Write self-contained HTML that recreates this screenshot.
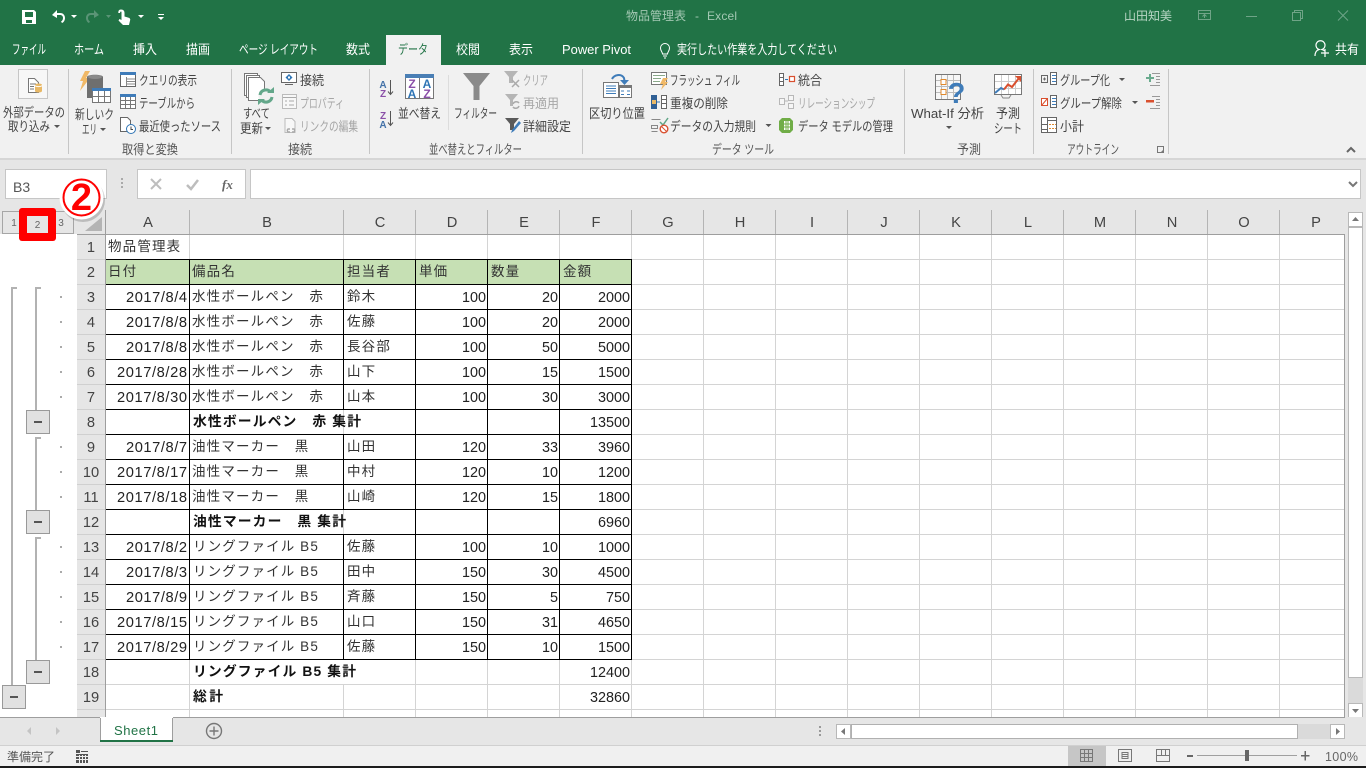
<!DOCTYPE html>
<html lang="ja"><head><meta charset="utf-8"><title>物品管理表 - Excel</title>
<style>
html,body{margin:0;padding:0;background:#e6e6e6;overflow:hidden}
svg{display:block;font-family:"Liberation Sans","Noto Sans CJK JP",sans-serif}
.r text{font-size:13px;fill:#444}
.r text.g{fill:#a6a6a6}
.c{font-size:13.5px;fill:#333;letter-spacing:1.17px}
.d{font-size:14.67px;fill:#222}
.n{font-size:14.4px;fill:#222;text-anchor:end}
.b{font-size:13.8px;font-weight:bold;fill:#111}
.h{font-size:14.67px;fill:#444;text-anchor:middle}
.tb text{font-size:13px;fill:#fff}
</style></head><body>
<svg xmlns="http://www.w3.org/2000/svg" width="1366" height="768" viewBox="0 0 1366 768">
<rect width="1366" height="768" fill="#e6e6e6"/>
<!-- title -->
<rect width="1366" height="65" fill="#217346"/>
<g fill="#fff">
<path fill-rule="evenodd" d="M22 10h12l2 2v12H22zM25 12v5h8v-5zM26 20v3h6v-3z"/>
<path d="M52 15l5-5v3h3c3.500 0 5 2.500 5 5s-1.500 4.500-3 5l-1-1.500c1-.5 2-1.800 2-3.500s-1-3-3-3h-3v3z"/>
<path d="M71 15h6l-3 3zM138 15h6l-3 3zM158 14h6v1h-6zM158 17h6l-3 3z"/>
<path d="M121 9.500c2.500 0 3.500 1.500 3.500 3.500v3.500l5 1.500.8 1.500-1.300 5.500h-6l-4.500-4.500 1-1.500 2 1V13c0-1 .0-1.500-.5-1.500s-1 .5-1 1.500h-1.700c0-2 .5-3.500 2.700-3.500z"/>
</g>
<g fill="#5a9476"><path d="M99 15l-5-5v3h-3c-3.500 0-5 2.500-5 5s1.500 4.500 3 5l1-1.500c-1-.5-2-1.800-2-3.500s1-3 3-3h3v3z"/><path d="M106 15h5l-2.500 3z"/></g>
<text x="626" y="20" font-size="12" fill="#a3c8b3" textLength="60">物品管理表</text>
<text x="695" y="20" font-size="12" fill="#a3c8b3">-</text>
<text x="707" y="20" font-size="12" fill="#a3c8b3" textLength="30">Excel</text>
<text x="1124" y="20" font-size="12" fill="#b9d6c5" textLength="48">山田知美</text>
<g fill="none" stroke="#6fa487" stroke-width="1">
<path d="M1198.500 10.500h12v9h-12zM1198.500 13.500h12M1204.500 18v-3M1202.500 16.500l2-2 2 2"/>
<path d="M1246 16.500h11"/>
<path d="M1292.500 12.500h8v8h-8zM1294.500 12.500v-2h8v8h-2"/>
<path d="M1338 10.500l10 10M1348 10.500l-10 10"/>
</g>
<!-- ribbon -->
<rect y="65" width="1366" height="93" fill="#f1f1f1"/>
<rect y="158" width="1366" height="2" fill="#d6d6d6"/>
<!-- tabs -->
<rect x="386" y="35" width="55" height="30" fill="#f1f1f1"/>
<g class="tb">
<text x="12" y="54" textLength="34" lengthAdjust="spacingAndGlyphs">ファイル</text>
<text x="74" y="54" textLength="30" lengthAdjust="spacingAndGlyphs">ホーム</text>
<text x="133" y="54" textLength="24" lengthAdjust="spacingAndGlyphs">挿入</text>
<text x="186" y="54" textLength="24" lengthAdjust="spacingAndGlyphs">描画</text>
<text x="239" y="54" textLength="79" lengthAdjust="spacingAndGlyphs">ページ レイアウト</text>
<text x="346" y="54" textLength="24" lengthAdjust="spacingAndGlyphs">数式</text>
<text x="398" y="54" textLength="30" lengthAdjust="spacingAndGlyphs" style="fill:#217346">データ</text>
<text x="456" y="54" textLength="24" lengthAdjust="spacingAndGlyphs">校閲</text>
<text x="509" y="54" textLength="24" lengthAdjust="spacingAndGlyphs">表示</text>
<text x="562" y="54" textLength="69" lengthAdjust="spacingAndGlyphs">Power Pivot</text>
<text x="677" y="54" textLength="160" lengthAdjust="spacingAndGlyphs">実行したい作業を入力してください</text>
<text x="1335" y="54" textLength="24" lengthAdjust="spacingAndGlyphs">共有</text>
</g>
<g fill="none" stroke="#fff">
<path d="M662.500 54c0-2-2-3-2-6a4.500 4.500 0 0 1 9 0c0 3-2 4-2 6zM663 56h4M664 58h2"/>
<path d="M1315 56c0-4 2-6 4-6.500a4.500 4.500 0 1 1 3 0c1 .3 2 .8 2.500 1.500M1325 49v8M1321 53h8" stroke-width="1.200"/>
</g>
<path stroke="#c6c6c6" d="M68.500 69v85M231.500 69v85M369.500 69v85M582.500 69v85M904.500 69v85M1033.500 69v85M1168.500 69v85"/>
<path stroke="#dcdcdc" d="M448.500 75v55"/>
<g class="r">
<text x="3" y="117" textLength="62" lengthAdjust="spacingAndGlyphs">外部データの</text>
<text x="8" y="131" textLength="42" lengthAdjust="spacingAndGlyphs">取り込み</text>
<text x="75" y="119" textLength="39" lengthAdjust="spacingAndGlyphs">新しいク</text>
<text x="82" y="134" textLength="15" lengthAdjust="spacingAndGlyphs">エリ</text>
<text x="139" y="85" textLength="58" lengthAdjust="spacingAndGlyphs">クエリの表示</text>
<text x="139" y="108" textLength="56" lengthAdjust="spacingAndGlyphs">テーブルから</text>
<text x="139" y="131" textLength="82" lengthAdjust="spacingAndGlyphs">最近使ったソース</text>
<text x="243" y="118" textLength="27" lengthAdjust="spacingAndGlyphs">すべて</text>
<text x="240" y="133" textLength="23" lengthAdjust="spacingAndGlyphs">更新</text>
<text x="300" y="85" textLength="24" lengthAdjust="spacingAndGlyphs">接続</text>
<text class="g" x="300" y="108" textLength="44" lengthAdjust="spacingAndGlyphs">プロパティ</text>
<text class="g" x="300" y="131" textLength="58" lengthAdjust="spacingAndGlyphs">リンクの編集</text>
<text x="398" y="118" textLength="43" lengthAdjust="spacingAndGlyphs">並べ替え</text>
<text x="454" y="118" textLength="43" lengthAdjust="spacingAndGlyphs">フィルター</text>
<text class="g" x="523" y="85" textLength="25" lengthAdjust="spacingAndGlyphs">クリア</text>
<text class="g" x="523" y="108" textLength="36" lengthAdjust="spacingAndGlyphs">再適用</text>
<text x="523" y="131" textLength="48" lengthAdjust="spacingAndGlyphs">詳細設定</text>
<text x="589" y="118" textLength="56" lengthAdjust="spacingAndGlyphs">区切り位置</text>
<text x="670" y="85" textLength="70" lengthAdjust="spacingAndGlyphs">フラッシュ フィル</text>
<text x="670" y="108" textLength="58" lengthAdjust="spacingAndGlyphs">重複の削除</text>
<text x="670" y="131" textLength="86" lengthAdjust="spacingAndGlyphs">データの入力規則</text>
<text x="798" y="85" textLength="24" lengthAdjust="spacingAndGlyphs">統合</text>
<text class="g" x="798" y="108" textLength="77" lengthAdjust="spacingAndGlyphs">リレーションシップ</text>
<text x="798" y="131" textLength="95" lengthAdjust="spacingAndGlyphs">データ モデルの管理</text>
<text x="911" y="118" textLength="73" lengthAdjust="spacingAndGlyphs">What-If 分析</text>
<text x="996" y="118" textLength="24" lengthAdjust="spacingAndGlyphs">予測</text>
<text x="994" y="133" textLength="28" lengthAdjust="spacingAndGlyphs">シート</text>
<text x="1060" y="85" textLength="50" lengthAdjust="spacingAndGlyphs">グループ化</text>
<text x="1060" y="108" textLength="62" lengthAdjust="spacingAndGlyphs">グループ解除</text>
<text x="1060" y="131" textLength="24" lengthAdjust="spacingAndGlyphs">小計</text>
<g style="fill:#555">
<text style="fill:#555" x="122" y="154" textLength="56" lengthAdjust="spacingAndGlyphs">取得と変換</text>
<text style="fill:#555" x="288" y="154" textLength="24" lengthAdjust="spacingAndGlyphs">接続</text>
<text style="fill:#555" x="429" y="154" textLength="93" lengthAdjust="spacingAndGlyphs">並べ替えとフィルター</text>
<text style="fill:#555" x="712" y="154" textLength="62" lengthAdjust="spacingAndGlyphs">データ ツール</text>
<text style="fill:#555" x="957" y="154" textLength="24" lengthAdjust="spacingAndGlyphs">予測</text>
<text style="fill:#555" x="1067" y="154" textLength="52" lengthAdjust="spacingAndGlyphs">アウトライン</text>
</g>
</g>
<!-- drop arrows -->
<path fill="#555" d="M54 125h6l-3 3zM100 128h6l-3 3zM265 127h6l-3 3zM765.500 124h6l-3 3zM1119 78h6l-3 3zM1132 101h6l-3 3zM946 126h6l-3 3z"/>
<!-- external data -->
<rect x="18.500" y="69.500" width="29" height="29" fill="#f7f7f7" stroke="#c6c6c6"/>
<path fill="#fff" stroke="#777" d="M28.500 78.500h6l4 4v10h-10z"/><path stroke="#777" d="M30 84h6M30 86.500h4M30 89h4"/>
<path fill="#e8b866" d="M35 85c0-2 7-2 7 0v6c0 2-7 2-7 0z"/><path stroke="#fff" fill="none" d="M35 85.500c1 1.500 6 1.500 7 0"/>
<!-- new query -->
<path fill="#f0b866" d="M85 71h5l-4 7h4l-10 13 3-10h-3z"/>
<path fill="#6f6f6f" d="M87 77c0-3 16-3 16 0v21H87z"/><ellipse cx="95" cy="77" rx="7" ry="2" fill="#8a8a8a"/>
<rect x="92.500" y="88.500" width="18" height="14" fill="#fff" stroke="#777"/><rect x="92" y="88" width="19" height="3" fill="#3f7cb9"/>
<path stroke="#777" d="M98.500 91v12M104.500 91v12M93 96.500h17"/>
<!-- query small -->
<rect x="120.500" y="73.500" width="15" height="13" fill="#fff" stroke="#666"/><rect x="120" y="72" width="16" height="3" fill="#3f7cb9"/>
<path stroke="#888" d="M126.500 77v9M127 79h8M127 81.500h8M127 84h8"/>
<rect x="120.500" y="95.500" width="15" height="13" fill="#fff" stroke="#777"/><rect x="120" y="94" width="16" height="3" fill="#3f7cb9"/>
<path stroke="#777" d="M125.500 97v12M130.500 97v12M121 100.500h14M121 104.500h14"/>
<path fill="#fff" stroke="#666" d="M120.500 117.500h7l3 3v11h-10z"/><circle cx="131" cy="129" r="4.500" fill="#fff" stroke="#2f75b5"/><path stroke="#444" fill="none" d="M131 126.500v3h2"/>
<!-- refresh all -->
<g fill="#fff" stroke="#777"><path d="M244.500 73.500h13v22h-13z"/><path d="M246.500 75.500h13v22h-13z"/><path d="M248.500 77.500h12l4 4v19h-16z"/></g>
<circle cx="266" cy="96" r="7.500" fill="#f1f1f1"/>
<g fill="none" stroke="#63a78a" stroke-width="3"><path d="M260 95a6 6 0 0 1 10.500-3M272 97a6 6 0 0 1-10.500 3"/></g>
<path fill="#63a78a" d="M267 93h7v-6zM265 99h-7v6z"/>
<!-- connections -->
<rect x="281.500" y="72.500" width="15" height="10" fill="#fff" stroke="#666"/><path stroke="#666" d="M285 84.500h8"/><path fill="#2f75b5" d="M289 74l3.500 3.500L289 81l-3.500-3.500z"/><rect x="288" y="76.500" width="2" height="2" fill="#fff"/>
<rect x="282.500" y="94.500" width="14" height="14" fill="#f7f7f7" stroke="#bbb"/><path stroke="#aaa" fill="none" d="M283 97.500h13M285 101h2M289 101h5M285 105h2M289 105h5"/>
<path fill="#f7f7f7" stroke="#bbb" d="M285 118.500h7l3 3v11h-10z"/><path fill="none" stroke="#aaa" stroke-width="1.500" d="M290 129h-2a2 2 0 0 0 0 3h2M292 129h2a2 2 0 0 1 0 3h-2"/>
<!-- sort -->
<g font-size="10" font-weight="bold" text-anchor="middle">
<text x="383" y="88" fill="#4472a8">A</text><text x="383" y="97" fill="#8a4fa8">Z</text>
<text x="383" y="119" fill="#8a4fa8">Z</text><text x="383" y="128" fill="#4472a8">A</text>
</g>
<path fill="none" stroke="#555" d="M390.500 80v14M388 91.500l2.500 3 2.500-3M390.500 111v14M388 122.500l2.500 3 2.500-3"/>
<rect x="405.500" y="74.500" width="28" height="24" fill="#fff" stroke="#777"/><rect x="405" y="74" width="29" height="4" fill="#4a7fb5"/><path stroke="#777" d="M419.500 78v21"/>
<g font-size="12" font-weight="bold" text-anchor="middle">
<text x="412" y="88" fill="#8a4fa8">Z</text><text x="412" y="98" fill="#2f75b5">A</text><text x="427" y="88" fill="#2f75b5">A</text><text x="427" y="98" fill="#8a4fa8">Z</text>
</g>
<!-- filter -->
<path fill="#8a8a8a" d="M463 73h27l-10.500 13v14h-6V86z"/>
<path fill="#b5b5b5" d="M504 71h14l-5 6v6h-4v-6z"/><path stroke="#aaa" stroke-width="1.500" d="M512 80l7 7M519 80l-7 7"/>
<path fill="#b5b5b5" d="M505 94h13l-5 6v6h-3v-6z"/><path fill="none" stroke="#aaa" stroke-width="1.500" d="M513 104a3.500 3.500 0 0 1 6-1M519 106a3.500 3.500 0 0 1-6 1"/>
<path fill="#5a5a5a" d="M505 118h14l-5 6v6h-4v-6z"/><path fill="#3f7cb9" d="M519 121l2 2-7 8-3 2 1-3z"/>
<!-- text to columns -->
<rect x="603.500" y="82.500" width="15" height="15" fill="#fff" stroke="#777"/><path stroke="#3f7cb9" d="M606 86h10M606 88.500h10M606 91h10M606 93.500h10"/>
<rect x="619.500" y="85.500" width="12" height="12" fill="#fff" stroke="#777"/><rect x="619" y="85" width="13" height="3" fill="#777"/><path stroke="#3f7cb9" d="M621 91h3M627 91h3M621 94.500h3M627 94.500h3"/>
<path fill="none" stroke="#3f7cb9" stroke-width="2" d="M612 79c2-4 9-6 12-1l.5 3"/><path fill="#3f7cb9" d="M620 80h9l-4.500 5z"/>
<!-- flash fill -->
<rect x="651.500" y="72.500" width="15" height="12" fill="#fff" stroke="#777"/><path stroke="#8aa98a" d="M653 75.500h12M653 78.500h8M653 81.500h7"/>
<path fill="#f0b866" d="M663 78h5l-3 4h3l-7 8 2-6h-3z"/>
<!-- remove dup -->
<rect x="651" y="95" width="6" height="14" fill="#2f5f94"/><rect x="652" y="100" width="4" height="4" fill="#e8b866"/>
<rect x="661.500" y="95.500" width="5" height="13" fill="#fff" stroke="#666"/><path stroke="#666" d="M662 99.500h4M662 103.500h4"/><path stroke="#2f75b5" d="M657 102h3"/>
<!-- validation -->
<path stroke="#888" fill="none" d="M651.500 119.500h9M651.500 125.500h6v3h-6zM651.500 131.500h6"/><path fill="none" stroke="#5fa586" stroke-width="1.500" d="M660 122l3 3 5-7"/>
<circle cx="664" cy="129" r="3.800" fill="#fff" stroke="#d9502f" stroke-width="1.400"/><path stroke="#d9502f" d="M661.500 126.500l5 5"/>
<!-- consolidate -->
<rect x="779.500" y="73.500" width="4" height="12" fill="#fff" stroke="#666"/><path stroke="#666" d="M780 77.500h3M780 81.500h3"/><path stroke="#2f75b5" d="M785 79.500h3"/>
<rect x="789.500" y="76.500" width="5" height="5" fill="#fff" stroke="#d9502f" stroke-width="1.200"/>
<!-- relationship -->
<g fill="#f6f6f6" stroke="#b8b8b8"><rect x="779.500" y="98.500" width="5" height="6"/><rect x="788.500" y="95.500" width="5" height="5"/><rect x="788.500" y="103.500" width="5" height="5"/></g>
<path stroke="#b8b8b8" fill="none" d="M785 101h3"/>
<!-- data model -->
<path fill="#70ad47" d="M782 118h8l3 3v9l-3 3h-8l-3-3v-9z"/><path fill="#fff" d="M784 121h6v9h-6z"/><path stroke="#70ad47" d="M786 121v9M788 121v9M784 124h6M784 127h6"/>
<!-- what if -->
<rect x="935.500" y="74.500" width="25" height="25" fill="#f7f7f7" stroke="#777"/>
<path stroke="#bbb" d="M941.500 75v24M947.500 75v24M953.500 75v24M936 80.500h24M936 86.500h24M936 92.500h24"/>
<rect x="941" y="79.500" width="5" height="5" fill="#fff" stroke="#e08a2e"/><rect x="941" y="89.500" width="5" height="5" fill="#fff" stroke="#e08a2e"/>
<text x="956.500" y="103" font-size="29" font-weight="bold" fill="#3f7cb9" text-anchor="middle">?</text>
<!-- forecast -->
<rect x="994.500" y="74.500" width="27" height="20" fill="#fff" stroke="#777"/>
<path stroke="#ccc" d="M1001.500 75v19M1008.500 75v19M1015.500 75v19M995 81.500h26M995 88.500h26"/>
<path fill="none" stroke="#3f7cb9" stroke-width="2" d="M995 93l6-5 3 1.500"/><path fill="none" stroke="#d9502f" stroke-width="2" d="M1004 89.500l4-5 4 2.500 7-9"/><path fill="#d9502f" d="M1015 76h6v6z"/>
<path fill="none" stroke="#888" d="M1001 95l2 3h6l2-3"/>
<!-- group -->
<g fill="none" stroke="#666"><rect x="1041.500" y="75.500" width="6" height="7"/><path d="M1043 79h3M1044.500 77.500v3"/><rect x="1050.500" y="72.500" width="6" height="12" fill="#fff"/></g>
<path stroke="#3f7cb9" d="M1052 75.500h4M1052 78.500h4M1052 81.500h4"/>
<rect x="1041.500" y="98.500" width="6" height="7" fill="#fff" stroke="#d9502f"/><path stroke="#d9502f" d="M1042 105l5-6"/><rect x="1050.500" y="95.500" width="6" height="12" fill="#fff" stroke="#666"/><path stroke="#3f7cb9" d="M1052 98.500h4M1052 101.500h4M1052 104.500h4"/>
<rect x="1041.500" y="117.500" width="15" height="15" fill="#fff" stroke="#666"/><path stroke="#666" d="M1047.500 118v14M1042 124.500h5M1042 129.500h5M1048 120.500h8"/><path stroke="#e08a2e" stroke-dasharray="2 1" d="M1049 124.500h7M1049 128.500h7"/>
<path fill="#6aab8e" d="M1146 77h3v-3h2v3h3v2h-3v3h-2v-3h-3z"/><rect x="1146" y="100" width="8" height="2.500" fill="#d9502f"/>
<path stroke="#999" d="M1152 73.500h8M1156 76.500h4M1156 79.500h4M1156 82.500h4M1150 85.500h10M1152 96.500h8M1156 99.500h4M1156 102.500h4M1156 105.500h4M1150 108.500h10"/>
<path fill="none" stroke="#777" d="M1157.500 146.500h6v6h-6z"/><path fill="#777" d="M1164 149v4h-4z"/>
<path fill="none" stroke="#666" stroke-width="2" d="M1347 152l4-4 4 4"/>
<!-- formula bar -->
<rect x="5.500" y="169.500" width="101" height="29" fill="#fff" stroke="#c6c6c6"/>
<text x="13" y="192" font-size="14" fill="#555">B3</text>
<path stroke="#aaa" stroke-width="2" stroke-dasharray="2 2" d="M122 178v12"/>
<rect x="137.500" y="169.500" width="108" height="29" fill="#fff" stroke="#c6c6c6"/>
<rect x="250.500" y="169.500" width="1110" height="29" fill="#fff" stroke="#c6c6c6"/>
<path stroke="#bdbdbd" stroke-width="2" fill="none" d="M151 179l10 10M161 179l-10 10"/>
<path stroke="#bdbdbd" stroke-width="2.500" fill="none" d="M187 185l4 4 7-9"/>
<text x="222" y="189" font-size="13" font-family="Liberation Serif,serif" font-style="italic" font-weight="bold" fill="#666">fx</text>
<path fill="none" stroke="#777" stroke-width="2" d="M1349 182l4 4 4-4"/>
<!-- sheet grid -->
<rect x="0" y="234" width="77" height="483" fill="#fff"/>
<rect x="106" y="235" width="1239" height="482" fill="#fff"/>
<rect x="106" y="260" width="526" height="24" fill="#c6e0b4"/>
<path stroke="#d4d4d4" fill="none" d="M189.500 235v482M343.500 235v424M343.500 684v33M415.500 235v482M487.500 235v482M559.500 235v482M631.500 235v482M703.500 235v482M775.500 235v482M847.500 235v482M919.500 235v482M991.500 235v482M1063.500 235v482M1135.500 235v482M1207.500 235v482M1279.500 235v482
M106 259.500h1239M106 284.500h1239M106 309.500h1239M106 334.500h1239M106 359.500h1239M106 384.500h1239M106 409.500h1239M106 434.500h1239M106 459.500h1239M106 484.500h1239M106 509.500h1239M106 534.500h1239M106 559.500h1239M106 584.500h1239M106 609.500h1239M106 634.500h1239M106 659.500h1239M106 684.500h1239M106 709.500h1239"/>
<path stroke="#000" fill="none" d="M105 259.500h527M105 284.500h527M105 309.500h527M105 334.500h527M105 359.500h527M105 384.500h527M105 409.500h527M105 434.500h527M105 459.500h527M105 484.500h527M105 509.500h527M105 534.500h527M105 559.500h527M105 584.500h527M105 609.500h527M105 634.500h527M105 659.500h527
M189.500 259v401M415.500 259v401M487.500 259v401M559.500 259v401M631.500 259v401M343.500 259v150M343.500 434v75M343.500 534v125"/>
<!-- headers -->
<rect x="77" y="210" width="1268" height="24" fill="#e6e6e6"/>
<rect x="77" y="234" width="28" height="483" fill="#e6e6e6"/>
<path stroke="#d0d0d0" d="M77 259.500h28M77 284.500h28M77 309.500h28M77 334.500h28M77 359.500h28M77 384.500h28M77 409.500h28M77 434.500h28M77 459.500h28M77 484.500h28M77 509.500h28M77 534.500h28M77 559.500h28M77 584.500h28M77 609.500h28M77 634.500h28M77 659.500h28M77 684.500h28M77 709.500h28"/>
<path stroke="#b4b4b4" d="M189.500 210v24M343.500 210v24M415.500 210v24M487.500 210v24M559.500 210v24M631.500 210v24M703.500 210v24M775.500 210v24M847.500 210v24M919.500 210v24M991.500 210v24M1063.500 210v24M1135.500 210v24M1207.500 210v24M1279.500 210v24"/>
<path stroke="#9e9e9e" fill="none" d="M77 234.500h1268M105.500 210v507M1344.500 234v483"/>
<path fill="#b4b4b4" d="M102 217v14H85z"/>
<g class="h">
<text x="148" y="227">A</text><text x="267" y="227">B</text><text x="380" y="227">C</text><text x="452" y="227">D</text><text x="524" y="227">E</text><text x="596" y="227">F</text><text x="668" y="227">G</text><text x="740" y="227">H</text><text x="812" y="227">I</text><text x="884" y="227">J</text><text x="956" y="227">K</text><text x="1028" y="227">L</text><text x="1100" y="227">M</text><text x="1172" y="227">N</text><text x="1244" y="227">O</text><text x="1316" y="227">P</text>
<text x="91" y="252">1</text><text x="91" y="277">2</text><text x="91" y="302">3</text><text x="91" y="327">4</text><text x="91" y="352">5</text><text x="91" y="377">6</text><text x="91" y="402">7</text><text x="91" y="427">8</text><text x="91" y="452">9</text><text x="91" y="477">10</text><text x="91" y="502">11</text><text x="91" y="527">12</text><text x="91" y="552">13</text><text x="91" y="577">14</text><text x="91" y="602">15</text><text x="91" y="627">16</text><text x="91" y="652">17</text><text x="91" y="677">18</text><text x="91" y="702">19</text><text x="91" y="727">20</text>
</g>
<!-- cells -->
<g class="c">
<text x="108" y="251">物品管理表</text>
<text x="108" y="276">日付</text><text x="192" y="276">備品名</text><text x="347" y="276">担当者</text><text x="419" y="276">単価</text><text x="491" y="276">数量</text><text x="563" y="276">金額</text>
<text x="192" y="301">水性ボールペン　赤</text><text x="347" y="301">鈴木</text>
<text x="192" y="326">水性ボールペン　赤</text><text x="347" y="326">佐藤</text>
<text x="192" y="351">水性ボールペン　赤</text><text x="347" y="351">長谷部</text>
<text x="192" y="376">水性ボールペン　赤</text><text x="347" y="376">山下</text>
<text x="192" y="401">水性ボールペン　赤</text><text x="347" y="401">山本</text>
<text x="192" y="451">油性マーカー　黒</text><text x="347" y="451">山田</text>
<text x="192" y="476">油性マーカー　黒</text><text x="347" y="476">中村</text>
<text x="192" y="501">油性マーカー　黒</text><text x="347" y="501">山崎</text>
<text x="193" y="551" textLength="126">リングファイル B5</text><text x="347" y="551">佐藤</text>
<text x="193" y="576" textLength="126">リングファイル B5</text><text x="347" y="576">田中</text>
<text x="193" y="601" textLength="126">リングファイル B5</text><text x="347" y="601">斉藤</text>
<text x="193" y="626" textLength="126">リングファイル B5</text><text x="347" y="626">山口</text>
<text x="193" y="651" textLength="126">リングファイル B5</text><text x="347" y="651">佐藤</text>
</g>
<g class="b">
<text x="193" y="426" textLength="168">水性ボールペン　赤 集計</text>
<text x="193" y="526" textLength="153">油性マーカー　黒 集計</text>
<text x="193" y="676" textLength="163">リングファイル B5 集計</text>
<text x="193" y="701" textLength="30">総計</text>
</g>
<g class="d">
<text x="126" y="302" textLength="61">2017/8/4</text><text x="126" y="327" textLength="61">2017/8/8</text><text x="126" y="352" textLength="61">2017/8/8</text>
<text x="117" y="377" textLength="70">2017/8/28</text><text x="117" y="402" textLength="70">2017/8/30</text>
<text x="126" y="452" textLength="61">2017/8/7</text><text x="117" y="477" textLength="70">2017/8/17</text><text x="117" y="502" textLength="70">2017/8/18</text>
<text x="126" y="552" textLength="61">2017/8/2</text><text x="126" y="577" textLength="61">2017/8/3</text><text x="126" y="602" textLength="61">2017/8/9</text>
<text x="117" y="627" textLength="70">2017/8/15</text><text x="117" y="652" textLength="70">2017/8/29</text>
</g>
<g class="n">
<text x="486" y="302">100</text><text x="558" y="302">20</text><text x="630" y="302">2000</text>
<text x="486" y="327">100</text><text x="558" y="327">20</text><text x="630" y="327">2000</text>
<text x="486" y="352">100</text><text x="558" y="352">50</text><text x="630" y="352">5000</text>
<text x="486" y="377">100</text><text x="558" y="377">15</text><text x="630" y="377">1500</text>
<text x="486" y="402">100</text><text x="558" y="402">30</text><text x="630" y="402">3000</text>
<text x="630" y="427">13500</text>
<text x="486" y="452">120</text><text x="558" y="452">33</text><text x="630" y="452">3960</text>
<text x="486" y="477">120</text><text x="558" y="477">10</text><text x="630" y="477">1200</text>
<text x="486" y="502">120</text><text x="558" y="502">15</text><text x="630" y="502">1800</text>
<text x="630" y="527">6960</text>
<text x="486" y="552">100</text><text x="558" y="552">10</text><text x="630" y="552">1000</text>
<text x="486" y="577">150</text><text x="558" y="577">30</text><text x="630" y="577">4500</text>
<text x="486" y="602">150</text><text x="558" y="602">5</text><text x="630" y="602">750</text>
<text x="486" y="627">150</text><text x="558" y="627">31</text><text x="630" y="627">4650</text>
<text x="486" y="652">150</text><text x="558" y="652">10</text><text x="630" y="652">1500</text>
<text x="630" y="677">12400</text><text x="630" y="702">32860</text>
</g>
<!-- outline gutter -->
<g fill="none" stroke="#b2b2b2" stroke-width="2">
<path d="M17 288H12v397M41 288h-5v122M41 438h-5v72M41 538h-5v122"/>
</g>
<path fill="#aaa" d="M60 296h2v2h-2zM60 321h2v2h-2zM60 346h2v2h-2zM60 371h2v2h-2zM60 396h2v2h-2zM60 446h2v2h-2zM60 471h2v2h-2zM60 496h2v2h-2zM60 546h2v2h-2zM60 571h2v2h-2zM60 596h2v2h-2zM60 621h2v2h-2zM60 646h2v2h-2z"/>
<g fill="#e1e1e1" stroke="#999"><rect x="26.500" y="410.500" width="23" height="23"/><rect x="26.500" y="510.500" width="23" height="23"/><rect x="26.500" y="660.500" width="23" height="23"/><rect x="2.500" y="685.500" width="23" height="23"/></g>
<path fill="#555" d="M34 421h8v2h-8zM34 521h8v2h-8zM34 671h8v2h-8zM10 696h8v2h-8z"/>
<!-- level buttons -->
<rect x="2.500" y="211.500" width="71" height="22" fill="#e6e6e6" stroke="#a6a6a6"/>
<rect x="19" y="208" width="37" height="33" rx="3" fill="#ff0000"/>
<rect x="27" y="216" width="21" height="17" fill="#e6e6e6"/>
<g font-size="10" fill="#666" text-anchor="middle"><text x="14" y="226">1</text><text x="37.500" y="228">2</text><text x="61" y="226">3</text></g>
<!-- sticker -->
<circle cx="83" cy="200" r="22" fill="#000" opacity=".18"/>
<circle cx="81.500" cy="197.500" r="22" fill="#fff"/>
<circle cx="81.500" cy="197.500" r="18" fill="#fff" stroke="#f00" stroke-width="2"/>
<text x="81.500" y="210" font-size="38" font-weight="bold" fill="#f00" text-anchor="middle">2</text>
<!-- vertical scrollbar -->
<rect x="1345" y="210" width="21" height="507" fill="#e6e6e6"/>
<rect x="1348" y="212" width="15" height="505" fill="#dadada"/>
<rect x="1348.500" y="212.500" width="14" height="14" fill="#fff" stroke="#b8b8b8"/><path fill="#777" d="M1352 221l3.500-4 3.500 4z"/>
<rect x="1348.500" y="227.500" width="14" height="450" fill="#fff" stroke="#b8b8b8"/>
<rect x="1348.500" y="703.500" width="14" height="14" fill="#fff" stroke="#b8b8b8"/><path fill="#777" d="M1352 709h7l-3.500 4z"/>
<path stroke="#9e9e9e" d="M1344.500 234v483"/>
<!-- tab bar -->
<rect y="717" width="1366" height="28" fill="#e6e6e6"/>
<path stroke="#9e9e9e" d="M0 717.500h1345"/>
<rect x="100" y="717" width="73" height="24" fill="#fff"/>
<path stroke="#9e9e9e" fill="none" d="M100.500 718v23M172.500 718v23"/>
<rect x="100" y="740" width="73" height="2" fill="#217346"/>
<text x="114" y="735" font-size="13" fill="#217346" textLength="44">Sheet1</text>
<path fill="#c4c4c4" d="M31 727v8l-4-4zM56 727v8l4-4z"/>
<circle cx="214" cy="731" r="7.500" fill="none" stroke="#777" stroke-width="1.400"/><path stroke="#777" stroke-width="1.400" d="M214 726.500v9M209.500 731h9"/>
<path stroke="#999" stroke-dasharray="2 2" stroke-width="2" d="M820 726v10"/>
<rect x="836" y="724" width="509" height="15" fill="#dadada"/>
<rect x="836.500" y="724.500" width="14" height="14" fill="#fff" stroke="#b8b8b8"/><path fill="#777" d="M845 728v7l-4-3.500z"/>
<rect x="851.500" y="724.500" width="446" height="14" fill="#fff" stroke="#b0b0b0"/>
<rect x="1330.500" y="724.500" width="14" height="14" fill="#fff" stroke="#b8b8b8"/><path fill="#777" d="M1336 728v7l4-3.500z"/>
<!-- status bar -->
<rect y="745" width="1366" height="21" fill="#f0f0f0"/>
<path stroke="#d0d0d0" d="M0 745.500h1366"/>
<rect y="766" width="1366" height="2" fill="#1c1c1c"/>
<text x="7" y="761" font-size="12" fill="#555" textLength="48">準備完了</text>
<rect x="76" y="750" width="4" height="3" fill="#555"/><path fill="#555" d="M76 754h12v9H76z"/><path stroke="#f0f0f0" d="M79.500 755v8M82.500 755v8M85.500 755v8M76 756.500h12M76 759.500h12"/><path stroke="#555" d="M81 751.500h7"/>
<rect x="1068" y="746" width="38" height="20" fill="#c6c6c6"/>
<path fill="none" stroke="#777" d="M1080.500 749.500h12v12h-12zM1084.500 750v11M1088.500 750v11M1081 753.500h11M1081 757.500h11"/>
<path fill="none" stroke="#777" d="M1118.500 749.500h13v12h-13zM1122 752.500h6v6h-6zM1122 754.500h6M1122 756.500h6"/>
<path fill="none" stroke="#777" d="M1156.500 749.500h13v12h-13zM1156.500 755.500h13M1161.500 750v5M1165.500 750v5"/>
<rect x="1187" y="755" width="6" height="2" fill="#666"/>
<rect x="1197" y="755" width="100" height="1" fill="#a0a0a0"/>
<rect x="1245" y="750" width="4" height="11" fill="#666"/>
<path fill="#666" d="M1301 755h3.500v-4h1.500v4h3.500v1.500h-3.500v4h-1.500v-4H1301z"/>
<text x="1325" y="761" font-size="12.500" fill="#666" textLength="33">100%</text>
</svg>
</body></html>
